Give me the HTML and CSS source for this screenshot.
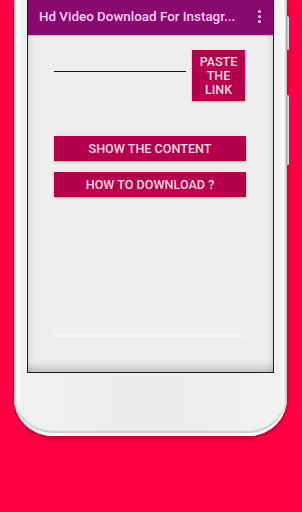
FILE: index.html
```html
<!DOCTYPE html>
<html lang="en">
<head>
	<meta charset="UTF-8" />
	<title>Hd Video Download For Instagram</title>
	<link rel="stylesheet" href="styles.css">
</head>
<body>
	<div class="phone">
		<span class="sideKey keyTop"></span>
		<span class="sideKey keyBottom"></span>
		<div class="screen">
			<div class="appBar">
				<span class="appTitle">Hd Video Download For Instagr...</span>
				<span class="moreBtn"><i></i><i></i><i></i></span>
			</div>
			<div class="content">
				<div class="linkRow">
					<input class="linkInput" type="text" />
					<a class="pasteBtn" href="###">PASTE<br />THE<br />LINK</a>
				</div>
				<a class="wideBtn showBtn" href="###">SHOW THE CONTENT</a>
				<a class="wideBtn" href="###">HOW TO DOWNLOAD ?</a>
				<div class="resultBox"></div>
			</div>
		</div>
	</div>
</body>
</html>
```

FILE: styles.css
```css
*{
	margin: 0;padding: 0;
	box-sizing: border-box;
}
body{
	width: 302px;height: 512px;
	overflow: hidden;
	background: #ff0047;
	font-family: Roboto, "Liberation Sans", sans-serif;
}
a{
	text-decoration: none;
}

/* phone body */
.phone{
	position: relative;
	width: 273px;height: 436px;
	margin-left: 14px;
	padding: 0 13px;
	border-radius: 0 0 38px 38px;
	background: linear-gradient(to right, #b9b9b9 0, #fdfdfd 3px, #f1f1f1 8px, #ececec 50%, #f1f1f1 calc(100% - 8px), #fdfdfd calc(100% - 3px), #b9b9b9 100%);
	box-shadow: inset 0 -3px 0 #fafafa, inset 0 -5px 2px #c9c9c9, 0 3px 5px rgba(90, 0, 20, .45);
}
.sideKey{
	position: absolute;
	right: -2px;
	width: 3px;
	border-radius: 2px;
	background: linear-gradient(to right, #9e9e9e, #e6e6e6);
}
.keyTop{
	top: 16px;height: 34px;
}
.keyBottom{
	top: 95px;height: 70px;
}

/* screen */
.screen{
	width: 247px;height: 373px;
	border: 1px solid #1e1e1e;
	border-top: 0;
	background: #f0eded;
	box-shadow: inset 0 -12px 10px -8px rgba(0, 0, 0, .22), inset 5px 0 6px -4px rgba(0, 0, 0, .12), inset -5px 0 6px -4px rgba(0, 0, 0, .12);
}
.appBar{
	display: flex;
	align-items: center;
	justify-content: space-between;
	height: 35px;
	padding: 0 12px 2px 11px;
	background: #8a076f;
	box-shadow: 0 1px 2px rgba(0, 0, 0, .25);
}
.appTitle{
	color: #fbd0f1;
	font-size: 13.4px;
	font-weight: 500;
	white-space: nowrap;
}
.moreBtn{
	display: flex;
	flex-direction: column;
	gap: 2px;
}
.moreBtn i{
	width: 3px;height: 3px;
	border-radius: 50%;
	background: #fbd0f1;
}

.content{
	padding: 15px 27px 0 26px;
}
.linkRow{
	display: flex;
	align-items: flex-start;
	gap: 6px;
}
.linkInput{
	width: 132px;height: 22px;
	border: 0;
	border-bottom: 1.5px solid #151515;
	background: transparent;
	outline: none;
}
.pasteBtn{
	display: flex;
	align-items: center;
	justify-content: center;
	width: 53px;height: 51px;
	background: #b5004b;
	box-shadow: 0 1px 2px rgba(0, 0, 0, .3);
	color: #fcd9e6;
	font-size: 12.5px;
	font-weight: 500;
	line-height: 14px;
	text-align: center;
}
.wideBtn{
	display: block;
	height: 25px;
	margin-top: 11px;
	background: #b5004b;
	box-shadow: 0 1px 2px rgba(0, 0, 0, .3);
	color: #fcd9e6;
	font-size: 12.6px;
	font-weight: 500;
	line-height: 25px;
	text-align: center;
}
.showBtn{
	margin-top: 35px;
}
.resultBox{
	width: 192px;height: 132px;
	margin-top: 8px;
	border: 1px solid #f3f0f0;
	border-bottom: 2px solid #f6f4f4;
	background: #f1eeee;
}
```
